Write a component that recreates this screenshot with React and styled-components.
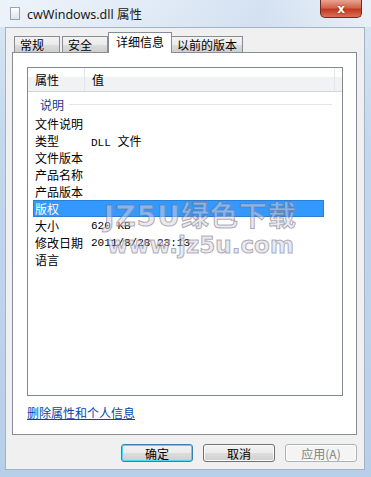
import styled, { createGlobalStyle } from "styled-components";

const GlobalStyle = createGlobalStyle`
  html, body {
    margin: 0;
    padding: 0;
    background: #c9dcf0;
  }
  body {
    font-family: "Noto Sans CJK SC", "Noto Sans", sans-serif;
  }
`;

const Window = styled.div`
  position: relative;
  width: 371px;
  height: 477px;
  display: flex;
  flex-direction: column;
  background: linear-gradient(180deg, #dbe7f4 0%, #c3d7ee 30%, #b8cfe9 100%);
  overflow: hidden;
`;

const TitleBar = styled.div`
  height: 27px;
  display: flex;
  align-items: center;
  padding-left: 10px;
  gap: 7px;
  background: linear-gradient(90deg, rgba(255,255,255,0.5), rgba(255,255,255,0.2) 40%, rgba(200,215,235,0.3) 70%, rgba(255,255,255,0.4));
`;

const DocIcon = styled.div`
  width: 10px;
  height: 13px;
  background: linear-gradient(180deg, #ffffff, #dfe3e8);
  border: 1px solid #9aa3ad;
  box-sizing: border-box;
`;

const TitleText = styled.span`
  font-family: "Noto Sans", "Noto Sans CJK SC", sans-serif;
  font-size: 12.5px;
  color: #1a1a1a;
  flex: 1;
`;

const CloseButton = styled.div`
  align-self: flex-start;
  width: 42px;
  height: 18px;
  margin-right: 9px;
  border: 1px solid #6d2b23;
  border-top: none;
  border-radius: 0 0 5px 5px;
  box-sizing: border-box;
  background: linear-gradient(180deg, #e8a493 0%, #d2654c 45%, #c2391d 55%, #d8705a 100%);
  display: flex;
  align-items: center;
  justify-content: center;
  color: #fff;
  font-family: "DejaVu Sans", sans-serif;
  font-weight: bold;
  font-size: 12px;
  text-shadow: 0 0 2px #6a1c10;
`;

const Client = styled.div`
  flex: 1;
  margin: 0 6px 7px 5px;
  background: #f0f0f0;
  border: 1px solid #a2b3c8;
  padding: 4px 7px 0 6px;
  display: flex;
  flex-direction: column;
`;

const TabStrip = styled.div`
  display: flex;
  align-items: flex-end;
  height: 21px;
  padding-left: 2px;
  position: relative;
  z-index: 1;
  margin-bottom: -1px;
`;

const Tab = styled.div`
  height: ${(p) => (p.$active ? "21px" : "17px")};
  min-width: ${(p) => (p.$active ? "64px" : "46px")};
  padding: 0 ${(p) => (p.$active ? "7px" : "5px")};
  margin-left: ${(p) => (p.$active ? "-2px" : "0")};
  margin-right: ${(p) => (p.$active ? "-1px" : "2px")};
  box-sizing: border-box;
  border: 1px solid #898c95;
  border-bottom: ${(p) => (p.$active ? "none" : "1px solid #898c95")};
  background: ${(p) =>
    p.$active ? "#ffffff" : "linear-gradient(180deg, #f3f3f3 0%, #ebebeb 50%, #dddddd 51%, #cfcfcf 100%)"};
  font-size: 12px;
  line-height: ${(p) => (p.$active ? "18px" : "15px")};
  color: #000;
  position: relative;
  z-index: ${(p) => (p.$active ? 2 : 1)};
`;

const Panel = styled.div`
  height: 383px;
  box-sizing: border-box;
  border: 1px solid #898c95;
  background: #ffffff;
  padding: 14px 13px 0 14px;
  display: flex;
  flex-direction: column;
`;

const ListView = styled.div`
  height: 329px;
  box-sizing: border-box;
  border: 1px solid #828790;
  background: #fff;
  display: flex;
  flex-direction: column;
`;

const Header = styled.div`
  height: 23px;
  display: flex;
  background: linear-gradient(180deg, #ffffff 0%, #ffffff 40%, #f1f2f4 41%, #f1f2f4 100%);
  border-bottom: 1px solid #d5d5d5;
  font-size: 12px;
`;

const HeaderCell = styled.div`
  width: ${(p) => p.$w};
  padding-left: 7px;
  line-height: 23px;
  border-right: 1px solid #e3e5e8;
  box-sizing: border-box;
  color: #000;
`;

const GroupRow = styled.div`
  display: flex;
  align-items: center;
  height: 20px;
  margin-top: 2px;
  padding-left: 12px;
  gap: 5px;
  font-size: 12px;
  color: #1e3a8a;
  margin-right: 10px;
  &::after {
    content: "";
    flex: 1;
    height: 1px;
    background: #e2e6ec;
  }
`;

const Rows = styled.div`
  display: flex;
  flex-direction: column;
  padding: 1px 18px 0 5px;
`;

const Row = styled.div`
  display: flex;
  height: 17px;
  align-items: center;
  font-size: 12px;
  color: ${(p) => (p.$selected ? "#fff" : "#000")};
  background: ${(p) => (p.$selected ? "#3399ff" : "transparent")};
  box-shadow: ${(p) => (p.$selected ? "inset 0 0 0 1px #2a7fd6" : "none")};
`;

const Name = styled.div`
  width: 56px;
  padding-left: 2px;
  white-space: nowrap;
`;

const Value = styled.div`
  font-family: "Liberation Mono", "Noto Sans CJK SC", monospace;
  font-size: 11px;
  white-space: nowrap;
  span {
    font-family: "Noto Sans CJK SC", sans-serif;
    font-size: 12px;
  }
`;

const RemoveLink = styled.a`
  margin-top: 8px;
  font-size: 12px;
  color: #0645ad;
  text-decoration: underline;
  align-self: flex-start;
`;

const ButtonRow = styled.div`
  display: flex;
  justify-content: flex-end;
  gap: 10px;
  margin-top: 9px;
`;

const Button = styled.div`
  width: 72px;
  height: 18px;
  box-sizing: border-box;
  border: 1px solid ${(p) => (p.$disabled ? "#adb2b5" : p.$default ? "#3c7fb1" : "#707070")};
  border-radius: 3px;
  background: ${(p) =>
    p.$disabled
      ? "#f4f4f4"
      : "linear-gradient(180deg, #f2f2f2 0%, #ebebeb 49%, #dddddd 50%, #cfcfcf 100%)"};
  box-shadow: ${(p) => (p.$default ? "inset 0 0 0 1px #48d8fb" : "inset 0 0 0 1px #fcfcfc")};
  display: flex;
  align-items: center;
  justify-content: center;
  font-size: 12px;
  color: ${(p) => (p.$disabled ? "#838383" : "#000")};
`;

const Watermark = styled.div`
  position: absolute;
  left: 104px;
  top: 203px;
  display: flex;
  flex-direction: column;
  align-items: center;
  font-family: "DejaVu Sans", "Noto Sans CJK SC", sans-serif;
  font-weight: bold;
  color: rgba(215, 210, 228, 0.5);
  -webkit-text-stroke: 1px rgba(110, 110, 122, 0.55);
  pointer-events: none;
  line-height: 1;
  div:first-child {
    font-size: 28px;
    letter-spacing: 1px;
  }
  div:last-child {
    font-size: 23px;
    margin-top: 3px;
  }
`;

const rows = [
  { name: "文件说明", value: "" },
  { name: "类型", value: <>DLL <span>文件</span></> },
  { name: "文件版本", value: "" },
  { name: "产品名称", value: "" },
  { name: "产品版本", value: "" },
  { name: "版权", value: "", selected: true },
  { name: "大小", value: "620 KB" },
  { name: "修改日期", value: "2011/8/28 23:13" },
  { name: "语言", value: "" },
];

const tabs = ["常规", "安全", "详细信息", "以前的版本"];

export default function App() {
  return (
    <>
      <GlobalStyle />
      <Window>
        <TitleBar>
          <DocIcon />
          <TitleText>cwWindows.dll 属性</TitleText>
          <CloseButton>x</CloseButton>
        </TitleBar>
        <Client>
          <TabStrip>
            {tabs.map((t) => (
              <Tab key={t} $active={t === "详细信息"}>
                {t}
              </Tab>
            ))}
          </TabStrip>
          <Panel>
            <ListView>
              <Header>
                <HeaderCell $w="57px">属性</HeaderCell>
                <HeaderCell $w="250px">值</HeaderCell>
              </Header>
              <GroupRow>说明</GroupRow>
              <Rows>
                {rows.map((r) => (
                  <Row key={r.name} $selected={r.selected}>
                    <Name>{r.name}</Name>
                    <Value>{r.value}</Value>
                  </Row>
                ))}
              </Rows>
            </ListView>
            <RemoveLink>删除属性和个人信息</RemoveLink>
          </Panel>
          <ButtonRow>
            <Button $default>确定</Button>
            <Button>取消</Button>
            <Button $disabled>应用(A)</Button>
          </ButtonRow>
        </Client>
        <Watermark>
          <div>JZ5U绿色下载</div>
          <div>www.jz5u.com</div>
        </Watermark>
      </Window>
    </>
  );
}
